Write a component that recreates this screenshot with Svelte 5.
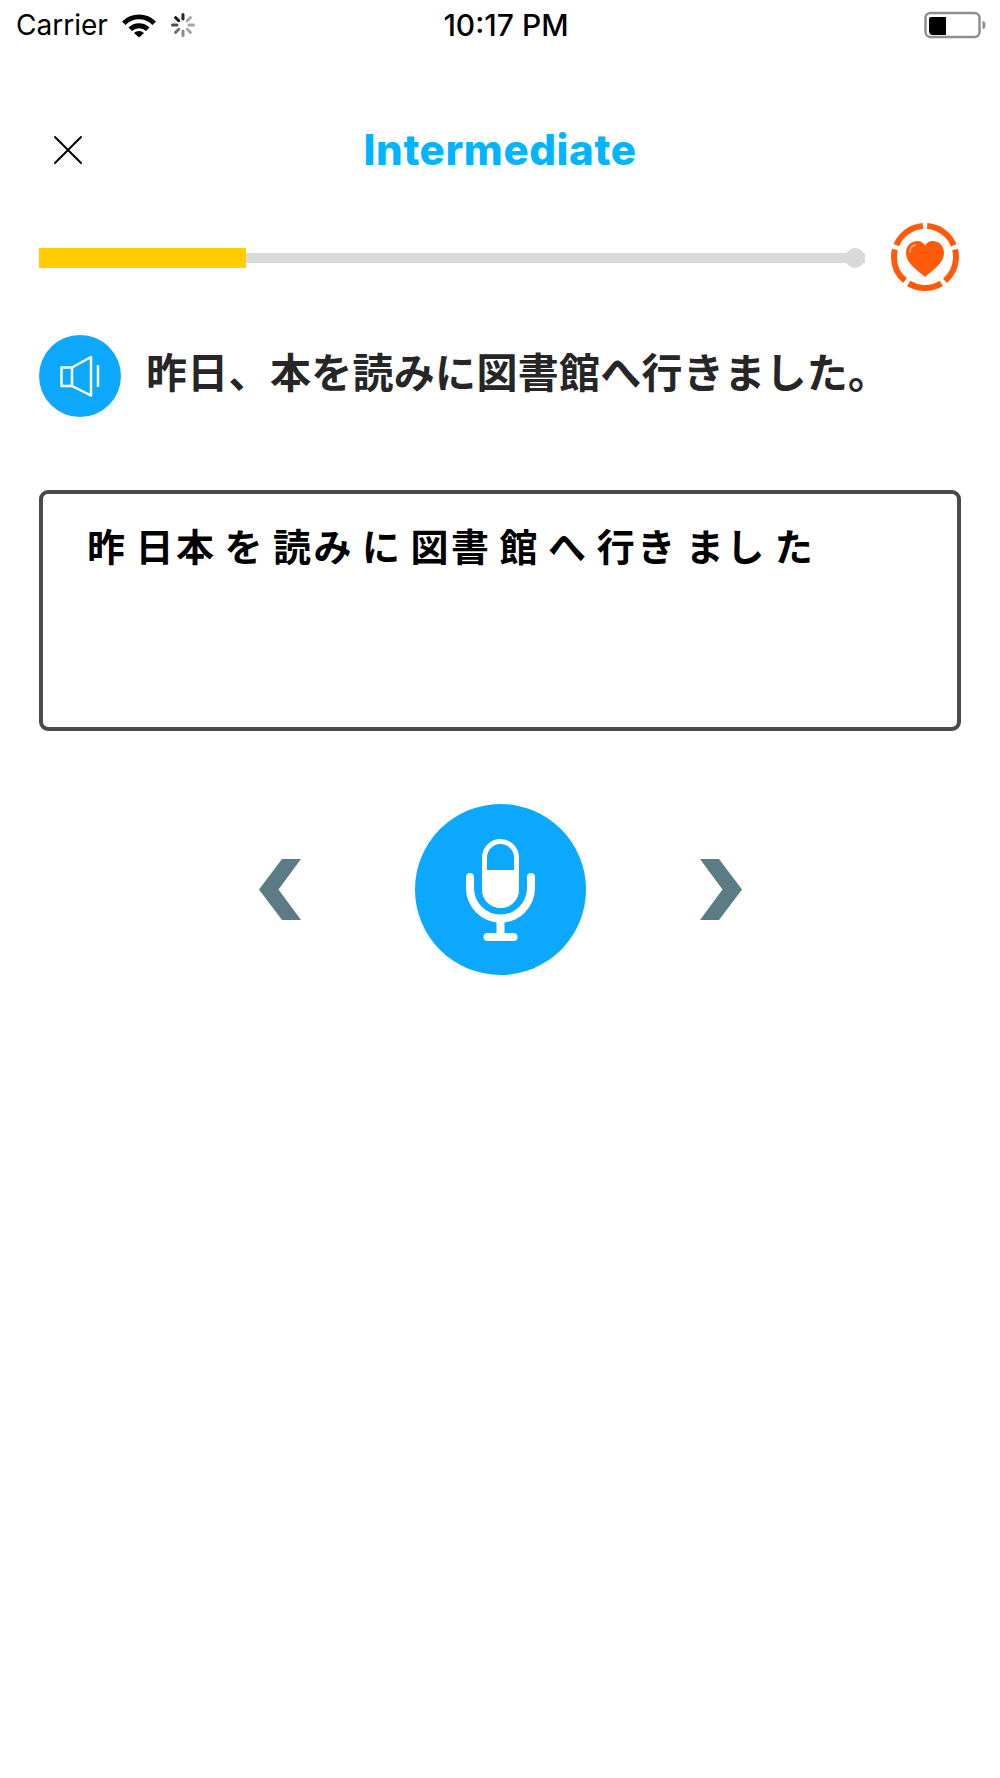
<script lang="ts">
  const tokens = ['昨', '日本', 'を', '読み', 'に', '図書', '館', 'へ', '行き', 'まし', 'た'];
  const spinner = [0, 45, 90, 135, 180, 225, 270, 315];
  const shades = [0.85, 0.35, 0.35, 0.35, 0.45, 0.55, 0.7, 0.9];
</script>

<div class="page">
  <div class="status">
    <div class="status-left">
      <span class="carrier">Carrier</span>
      <svg width="36" height="26" viewBox="0 0 36 26">
        <path d="M1 9.5 A24 24 0 0 1 35 9.5 L31.5 13 A19 19 0 0 0 4.5 13Z" fill="#000" />
        <path d="M7.5 15.5 A15 15 0 0 1 28.5 15.5 L25 19 A10 10 0 0 0 11 19Z" fill="#000" />
        <path d="M13 21 A7 7 0 0 1 23 21 L18 25.5Z" fill="#000" />
      </svg>
      <svg width="26" height="26" viewBox="0 0 26 26">
        {#each spinner as a, i}
          <rect x="11.5" y="1" width="3" height="7.500" rx="1.500" fill="#000" opacity={shades[i]} transform="rotate({a} 13 13)" />
        {/each}
      </svg>
    </div>
    <span class="time">10:17 PM</span>
    <svg class="battery" width="63" height="28" viewBox="0 0 63 28">
      <rect x="2.500" y="2" width="54" height="24" rx="5" fill="none" stroke="#8e8e8e" stroke-width="2.500" />
      <path d="M6 8 a2 2 0 0 1 2 -2 H23 V24 H10 a4 4 0 0 1 -4 -4Z" fill="#000" />
      <path d="M59.500 10 a3 4 0 0 1 0 8Z" fill="#8e8e8e" />
    </svg>
  </div>

  <div class="head">
    <button class="close" aria-label="Close">
      <svg width="30" height="30" viewBox="0 0 30 30">
        <path d="M2 2 L28 28 M28 2 L2 28" stroke="#000" stroke-width="2" stroke-linecap="round" />
      </svg>
    </button>
    <h1>Intermediate</h1>
  </div>

  <div class="progress">
    <div class="track">
      <div class="fill"></div>
      <div class="dot"></div>
    </div>
    <svg width="70" height="70" viewBox="0 0 70 70">
      <circle cx="35" cy="35" r="31" fill="none" stroke="#ff5a09" stroke-width="6" stroke-dasharray="34.4 4.550" transform="rotate(-86 35 35)" />
      <path d="M35 55 C29 49 16 42 16 31 C16 23 22 19 27 19 C31 19 33.500 21 35 23.500 C36.500 21 39 19 43 19 C48 19 54 23 54 31 C54 42 41 49 35 55Z" fill="#ff5a09" />
      <path d="M20 30 C20 26 22.500 23.500 25.500 23" fill="none" stroke="#ffb48f" stroke-width="1.300" stroke-linecap="round" />
    </svg>
  </div>

  <div class="sentence">
    <button class="speaker" aria-label="Play">
      <svg width="44" height="44" viewBox="0 0 44 44">
        <g fill="none" stroke="#fff" stroke-width="2.500" stroke-linejoin="round">
          <path d="M3.500 13.500 H14 V32 H3.500Z" />
          <path d="M14 13.500 L33 3 V41.500 L14 32" />
        </g>
        <path d="M40 11 V33" stroke="#fff" stroke-width="2.500" />
      </svg>
    </button>
    <p>昨日、本を読みに図書館へ行きました。</p>
  </div>

  <div class="answer">
    {#each tokens as t}
      <span>{t}</span>
    {/each}
  </div>

  <div class="controls">
    <svg width="42" height="61" viewBox="0 0 42 61"><path d="M23 0 H42 L19.500 30.500 L42 61 H23 L0 30.500Z" fill="#5b7c85" /></svg>
    <button class="mic" aria-label="Record">
      <svg width="69" height="102" viewBox="0 0 69 102">
        <g fill="none" stroke="#fff">
          <rect x="18.500" y="2.500" width="32" height="64" rx="16" stroke-width="5" />
          <path d="M4 38 V49 A30.500 30.500 0 0 0 65 49 V38" stroke-width="8" stroke-linecap="round" />
          <path d="M34.500 80 V98" stroke-width="8" />
          <path d="M21.500 98 H47.500" stroke-width="8" stroke-linecap="round" />
        </g>
        <path d="M16 31 H53 V50.500 a18.500 18.500 0 0 1 -37 0Z" fill="#fff" />
      </svg>
    </button>
    <svg width="42" height="61" viewBox="0 0 42 61"><path d="M19 0 H0 L22.500 30.500 L0 61 H19 L42 30.500Z" fill="#5b7c85" /></svg>
  </div>
</div>

<style>
  :global(body) {
    background: #fff;
  }

  .page {
    width: 1000px;
    height: 1778px;
    font-family: Inter, "Noto Sans CJK JP", sans-serif;
    overflow: hidden;
  }

  button {
    border: none;
    padding: 0;
    background: none;
    display: flex;
    align-items: center;
    justify-content: center;
  }

  .status {
    height: 50px;
    display: grid;
    grid-template-columns: 1fr auto 1fr;
    align-items: center;
    padding: 0 14px 0 16px;
    color: #000;
  }

  .status-left {
    display: flex;
    align-items: center;
    gap: 13px;
  }

  .carrier {
    font-size: 28px;
  }

  .time {
    font-size: 30px;
    font-weight: 500;
    margin-left: 10px;
  }

  .battery {
    justify-self: end;
  }

  .head {
    display: grid;
    grid-template-columns: 1fr auto 1fr;
    align-items: center;
    height: 100px;
    margin-top: 50px;
    padding-left: 53px;
    padding-right: 53px;
  }

  .close {
    justify-self: start;
  }

  h1 {
    margin: 0;
    color: #00b4ff;
    font-size: 42px;
    font-weight: 800;
    line-height: 1;
    letter-spacing: 0.6px;
  }

  .progress {
    display: flex;
    align-items: center;
    gap: 25px;
    height: 70px;
    padding-left: 39px;
    margin-top: 22px;
  }

  .track {
    position: relative;
    width: 826px;
    height: 10px;
    margin-top: 2px;
    background: #d9d9d9;
  }

  .fill {
    position: absolute;
    left: 0;
    top: -5px;
    width: 207px;
    height: 20px;
    background: #ffcd00;
  }

  .dot {
    position: absolute;
    right: 0;
    top: -5px;
    width: 20px;
    height: 20px;
    border-radius: 50%;
    background: #d9d9d9;
  }

  .sentence {
    display: flex;
    align-items: center;
    gap: 25px;
    padding-left: 39px;
    margin-top: 43px;
  }

  .speaker {
    width: 82px;
    height: 82px;
    border-radius: 50%;
    background: #0ca8fd;
    flex-shrink: 0;
  }

  .sentence p {
    margin: 0 0 5px;
    font-size: 41px;
    line-height: 1;
    font-weight: 700;
    letter-spacing: 0.3px;
    color: #262626;
    white-space: nowrap;
  }

  .answer {
    box-sizing: border-box;
    display: flex;
    align-items: flex-start;
    gap: 8px;
    width: 922px;
    height: 241px;
    margin: 73px 0 0 39px;
    padding: 31px 0 0 44px;
    border: 4px solid #4a4a4a;
    border-radius: 9px;
    font-size: 38px;
    line-height: 1.2;
    font-weight: 700;
    letter-spacing: 2.5px;
    color: #000;
  }

  .controls {
    display: flex;
    align-items: center;
    justify-content: center;
    gap: 114px;
    margin-top: 73px;
  }

  .mic {
    width: 171px;
    height: 171px;
    border-radius: 50%;
    background: #0ca8fd;
  }
</style>
